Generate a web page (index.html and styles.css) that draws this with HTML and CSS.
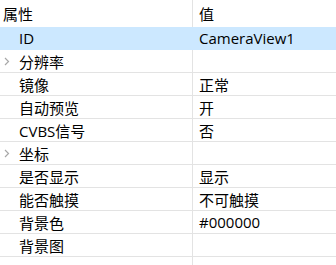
FILE: index.html
```html
<!DOCTYPE html>
<html lang="zh-CN">
  <head>
    <meta charset="utf-8" />
    <title>属性</title>
    <link rel="stylesheet" href="styles.css">
  </head>
  <body>
    <div class="grid">
      <div class="row header">
        <div class="name">属性</div>
        <div class="value">值</div>
      </div>
      <div class="row selected">
        <div class="name">ID</div>
        <div class="value">CameraView1</div>
      </div>
      <div class="row">
        <div class="name"><svg class="chevron" width="6" height="9" viewBox="0 0 6 9"><path d="M1 1l3.5 3.5L1 8" fill="none" stroke="#a8a8a8" stroke-width="1.2"/></svg>分辨率</div>
        <div class="value"></div>
      </div>
      <div class="row">
        <div class="name">镜像</div>
        <div class="value">正常</div>
      </div>
      <div class="row">
        <div class="name">自动预览</div>
        <div class="value">开</div>
      </div>
      <div class="row">
        <div class="name">CVBS信号</div>
        <div class="value">否</div>
      </div>
      <div class="row">
        <div class="name"><svg class="chevron" width="6" height="9" viewBox="0 0 6 9"><path d="M1 1l3.5 3.5L1 8" fill="none" stroke="#a8a8a8" stroke-width="1.2"/></svg>坐标</div>
        <div class="value"></div>
      </div>
      <div class="row">
        <div class="name">是否显示</div>
        <div class="value">显示</div>
      </div>
      <div class="row">
        <div class="name">能否触摸</div>
        <div class="value">不可触摸</div>
      </div>
      <div class="row">
        <div class="name">背景色</div>
        <div class="value">#000000</div>
      </div>
      <div class="row">
        <div class="name">背景图</div>
        <div class="value"></div>
      </div>
      <div class="row filler">
        <div class="name"></div>
        <div class="value"></div>
      </div>
    </div>
  </body>
</html>
```

FILE: styles.css
```css
* {
  box-sizing: border-box;
}

html, body {
  height: 100%;
}

body {
  margin: 0;
  background: #ffffff;
  color: #000000;
  font-family: "Open Sans", "Noto Sans CJK SC", sans-serif;
  font-size: 15px;
}

.grid {
  display: flex;
  flex-direction: column;
  height: 100%;
}

.row {
  display: grid;
  grid-template-columns: 192px 1fr;
  height: 23px;
  border-bottom: 1px solid #e3e3e3;
}

.row .name {
  display: flex;
  align-items: center;
  padding-left: 19px;
  position: relative;
  white-space: nowrap;
}

.row .value {
  display: flex;
  align-items: center;
  padding-left: 6px;
  border-left: 1px solid #e3e3e3;
  white-space: nowrap;
}

.header {
  height: 27px;
  border-bottom: none;
}

.header .name {
  padding-left: 3px;
}

.selected {
  background: #cce8ff;
  border-bottom-color: #cce8ff;
}

.selected .value {
  border-left-color: #cce8ff;
}

.filler {
  flex: 1;
  border-bottom: none;
}

/* expander arrow sits in the indent, left of the label */
.chevron {
  position: absolute;
  left: 4px;
  top: 7px;
}
```
